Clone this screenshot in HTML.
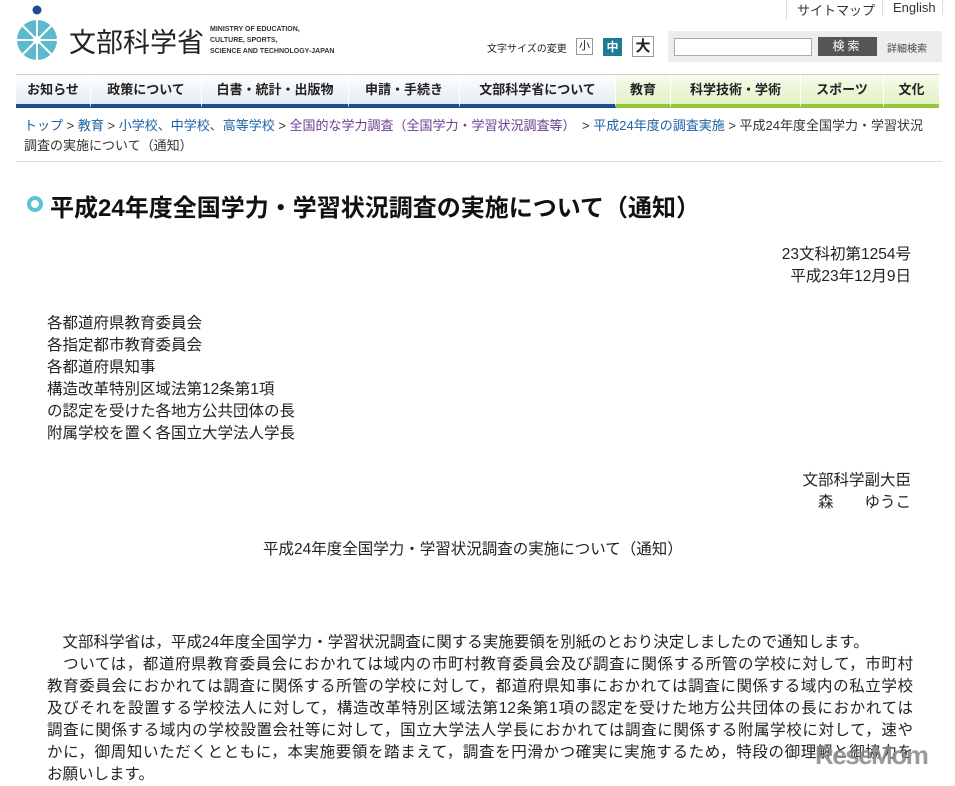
<!DOCTYPE html>
<html><head><meta charset="utf-8"><style>
*{margin:0;padding:0;box-sizing:border-box}
body{width:955px;height:779px;overflow:hidden;background:#fff;font-family:"Liberation Sans","Noto Sans CJK JP",sans-serif;color:#222;position:relative}
.a{position:absolute;white-space:nowrap}
.nav{position:absolute;top:74px;left:16px;height:34px;display:flex}
.nav div{height:34px;border-bottom:4px solid #1d4f8c;background:linear-gradient(#fff,#e4ebf3);border-right:1px solid #fff;border-top:1px solid #ccc;font-size:13px;font-weight:bold;text-align:center;line-height:30px;color:#222}
.nav div.g{border-bottom-color:#94c83a;background:linear-gradient(#f6fbec,#e2f1c6)}
.t{font-size:15.5px;line-height:22px}
.j{width:866px;text-align:justify;text-align-last:justify;white-space:nowrap;height:22px;overflow:visible}
</style></head><body>
<svg class="a" style="left:15px;top:4px" width="44" height="58" viewBox="0 0 44 58">
<circle cx="22" cy="6" r="4.5" fill="#1a4d96"/>
<circle cx="22" cy="36" r="20" fill="#5cb8cf"/>
<g stroke="#fff" stroke-width="2"><line x1="22" y1="16" x2="22" y2="56"/><line x1="2" y1="36" x2="42" y2="36"/><line x1="8" y1="22" x2="36" y2="50"/><line x1="36" y1="22" x2="8" y2="50"/></g>
<circle cx="22" cy="36" r="4" fill="#fff"/></svg>
<div class="a" style="left:69px;top:21px;font-size:27px;letter-spacing:0px;color:#222">文部科学省</div>
<div class="a" style="left:210px;top:24px;font-size:7px;font-weight:bold;line-height:11px;color:#333">MINISTRY OF EDUCATION,<br>CULTURE, SPORTS,<br>SCIENCE AND TECHNOLOGY-JAPAN</div>
<div class="a" style="left:786px;top:0;font-size:13px;color:#333;border-left:1px dotted #bbb;padding-left:10px">サイトマップ</div>
<div class="a" style="left:882px;top:0;font-size:13px;color:#333;border-left:1px dotted #bbb;padding-left:10px;border-right:1px dotted #bbb;padding-right:6px">English</div>
<div class="a" style="left:487px;top:40px;font-size:10px">文字サイズの変更</div>
<div class="a" style="left:576px;top:38px;width:17px;height:17px;border:1px solid #999;font-size:11px;text-align:center;line-height:15px">小</div>
<div class="a" style="left:603px;top:38px;width:19px;height:18px;background:#1f7a94;color:#fff;font-size:12px;font-weight:bold;text-align:center;line-height:18px">中</div>
<div class="a" style="left:632px;top:36px;width:22px;height:21px;border:1px solid #999;font-size:15px;font-weight:bold;text-align:center;line-height:19px">大</div>
<div class="a" style="left:668px;top:31px;width:274px;height:31px;background:#ededed"></div>
<div class="a" style="left:674px;top:38px;width:138px;height:18px;background:#fff;border:1px solid #aaa"></div>
<div class="a" style="left:818px;top:37px;width:59px;height:19px;background:#555;color:#fff;font-size:12px;text-align:center;line-height:19px;letter-spacing:3px">検索</div>
<div class="a" style="left:887px;top:40px;font-size:10px;color:#444">詳細検索</div>
<div class="nav">
<div style="width:75px">お知らせ</div><div style="width:111px">政策について</div><div style="width:147px">白書・統計・出版物</div><div style="width:111px">申請・手続き</div><div style="width:156px">文部科学省について</div><div class="g" style="width:55px">教育</div><div class="g" style="width:130px">科学技術・学術</div><div class="g" style="width:83px">スポーツ</div><div class="g" style="width:55px;border-right:0">文化</div>
</div>
<div class="a" style="left:24px;top:116px;font-size:13px;line-height:20px;color:#333"><span style="color:#1a5fa8">トップ</span> &gt; <span style="color:#1a5fa8">教育</span> &gt; <span style="color:#1a5fa8">小学校、中学校、高等学校</span> &gt; <span style="color:#6a3c8e">全国的な学力調査（全国学力・学習状況調査等）</span>　&gt; <span style="color:#1a5fa8">平成24年度の調査実施</span> &gt; 平成24年度全国学力・学習状況<br>調査の実施について（通知）</div>
<div class="a" style="left:16px;top:161px;width:926px;border-top:1px solid #ddd"></div>
<div class="a" style="left:27px;top:196px;width:16px;height:16px;border-radius:50%;border:4.5px solid #5cc0d8"></div>
<div class="a" style="left:50px;top:188px;font-size:24px;font-weight:bold;color:#111">平成24年度全国学力・学習状況調査の実施について（通知）</div>
<div class="a t" style="right:44px;top:244px;text-align:right">23文科初第1254号<br>平成23年12月9日</div>
<div class="a t" style="left:47px;top:313px">各都道府県教育委員会<br>各指定都市教育委員会<br>各都道府県知事<br>構造改革特別区域法第12条第1項<br>の認定を受けた各地方公共団体の長<br>附属学校を置く各国立大学法人学長</div>
<div class="a t" style="right:44px;top:470px;text-align:right">文部科学副大臣<br>森　　ゆうこ</div>
<div class="a t" style="left:263px;top:539px">平成24年度全国学力・学習状況調査の実施について（通知）</div>
<div class="a t" style="left:47px;top:632px">
<div style="height:22px">　文部科学省は，平成24年度全国学力・学習状況調査に関する実施要領を別紙のとおり決定しましたので通知します。</div>
<div class="j">　ついては，都道府県教育委員会におかれては域内の市町村教育委員会及び調査に関係する所管の学校に対して，市町村</div>
<div class="j">教育委員会におかれては調査に関係する所管の学校に対して，都道府県知事におかれては調査に関係する域内の私立学校</div>
<div class="j">及びそれを設置する学校法人に対して，構造改革特別区域法第12条第1項の認定を受けた地方公共団体の長におかれては</div>
<div class="j">調査に関係する域内の学校設置会社等に対して，国立大学法人学長におかれては調査に関係する附属学校に対して，速や</div>
<div class="j">かに，御周知いただくとともに，本実施要領を踏まえて，調査を円滑かつ確実に実施するため，特段の御理解と御協力を</div>
<div style="height:22px">お願いします。</div>
</div>
<div class="a" style="left:815px;top:740px;font-size:26px;font-weight:bold;color:#888;opacity:.85;letter-spacing:-1.5px">ReseMom</div>
</body></html>
